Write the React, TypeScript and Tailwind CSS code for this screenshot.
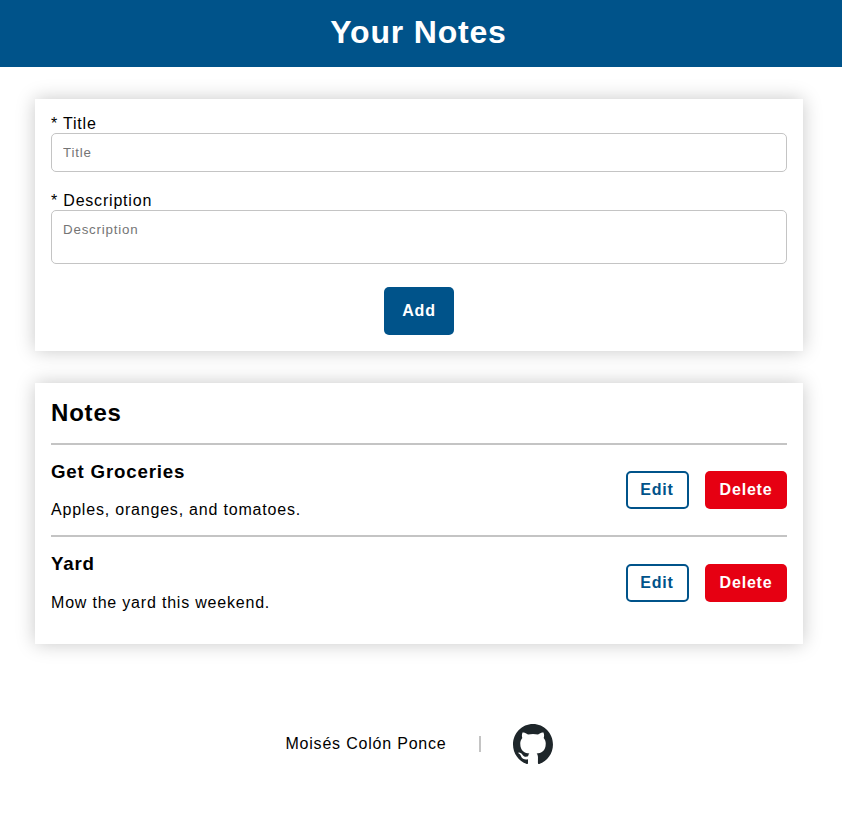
import React from "react";

const notes = [
  { title: "Get Groceries", text: "Apples, oranges, and tomatoes.", row: "h-[92px]", gap: "mt-[19px]", buttons: "mt-[26px]" },
  { title: "Yard", text: "Mow the yard this weekend.", row: "h-[93px]", gap: "mt-5", buttons: "mt-[27px]" },
];

const card = "mx-auto w-[768px] bg-white px-4 shadow-[0_0_18px_rgba(0,0,0,0.22)]";

function Note({ title, text, row, gap, buttons }: (typeof notes)[number]) {
  return (
    <li className={"flex items-start justify-between border-t-2 border-[#c4c4c4] " + row}>
      <div className="pt-4">
        <h3 className="text-[18.72px] leading-[21px] font-bold">{title}</h3>
        <p className={"text-base leading-[18px] " + gap}>{text}</p>
      </div>
      <div className={"flex gap-4 font-bold " + buttons}>
        <button className="h-[38px] w-[63px] rounded-[5px] border-2 border-[#00538a] pr-px text-base tracking-[0.8px] text-[#00538a]">Edit</button>
        <button className="h-[38px] w-[82px] rounded-[5px] bg-[#e60012] text-base tracking-[0.8px] text-white">Delete</button>
      </div>
    </li>
  );
}

export default function App() {
  return (
    <div className="h-[813px] w-[838px] bg-white font-['Liberation_Sans',Arial,sans-serif] tracking-[0.8px] text-black">
      <header className="-mr-1 h-[67px] bg-[#00538a] pt-[14px] pr-[5px] text-center text-white">
        <h1 className="text-[32px] leading-[37px] font-bold">Your Notes</h1>
      </header>
      <main className="flex flex-col gap-8 pt-8">
        <form className={card + " h-[252px] pt-4"}>
          <label className="block h-[18px] leading-[18px]">* Title</label>
          <input placeholder="Title" className="block h-[39px] w-full rounded-[5px] border border-[#c4c4c4] px-[11px] text-[13.333px] tracking-[0.8px] placeholder:text-[#757575]" />
          <label className="mt-5 block h-[18px] leading-[18px]">* Description</label>
          <textarea placeholder="Description" className="block h-[54px] w-full resize-none rounded-[5px] border border-[#c4c4c4] px-[11px] py-[11px] text-[13.333px] leading-[15px] tracking-[0.8px] placeholder:text-[#757575]" />
          <button type="button" className="mx-auto mt-[23px] block h-12 w-[70px] rounded-[5px] bg-[#00538a] text-base font-bold tracking-[0.8px] text-white">Add</button>
        </form>
        <section className={card + " h-[261px] pt-4"}>
          <h2 className="mb-4 text-2xl leading-[28px] font-bold">Notes</h2>
          <ul>{notes.map((n) => <Note key={n.title} {...n} />)}</ul>
        </section>
      </main>
      <footer className="flex items-center justify-center pt-20">
        <span>Moisés Colón Ponce</span>
        <span className="mx-8 h-4 w-0.5 bg-[#c4c4c4]" />
        <svg viewBox="0 0 97.7 96" preserveAspectRatio="none" className="h-10 w-10 fill-[#1e262a]" aria-label="GitHub">
          <path fillRule="evenodd" clipRule="evenodd" d="M48.854 0C21.839 0 0 22 0 49.217c0 21.756 13.993 40.172 33.405 46.69 2.427.49 3.316-1.059 3.316-2.362 0-1.141-.08-5.052-.08-9.127-13.59 2.934-16.42-5.867-16.42-5.867-2.184-5.704-5.42-7.17-5.42-7.17-4.448-3.015.324-3.015.324-3.015 4.934.326 7.523 5.052 7.523 5.052 4.367 7.496 11.404 5.378 14.235 4.074.404-3.178 1.699-5.378 3.074-6.6-10.839-1.141-22.243-5.378-22.243-24.283 0-5.378 1.94-9.778 5.014-13.2-.485-1.222-2.184-6.275.486-13.038 0 0 4.125-1.304 13.426 5.052a46.97 46.97 0 0 1 12.214-1.63c4.125 0 8.33.571 12.213 1.63 9.302-6.356 13.427-5.052 13.427-5.052 2.67 6.763.97 11.816.485 13.038 3.155 3.422 5.015 7.822 5.015 13.2 0 18.905-11.404 23.06-22.324 24.283 1.78 1.548 3.316 4.481 3.316 9.126 0 6.6-.08 11.897-.08 13.526 0 1.304.89 2.853 3.316 2.364 19.412-6.52 33.405-24.935 33.405-46.691C97.707 22 75.788 0 48.854 0z" />
        </svg>
      </footer>
    </div>
  );
}
